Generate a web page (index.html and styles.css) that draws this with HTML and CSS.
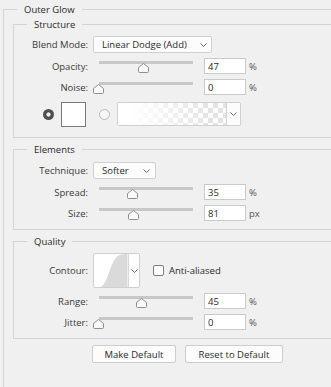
FILE: index.html
```html
<!DOCTYPE html>
<html lang="en">
<head>
<meta charset="utf-8">
<title>Outer Glow</title>
<link rel="stylesheet" href="styles.css">
</head>
<body>
<fieldset class="group outer">
  <legend>Outer Glow</legend>

  <fieldset class="group sub structure">
    <legend>Structure</legend>
    <div class="row">
      <span class="lbl">Blend Mode:</span>
      <div class="select blend"><span class="sel-text">Linear Dodge (Add)</span><svg class="chev" width="7" height="4" viewBox="0 0 7 4"><polyline points="0.5,0.5 3.5,3.5 6.5,0.5"/></svg></div>
    </div>
    <div class="row srow first">
      <span class="lbl">Opacity:</span>
      <div class="slider"><div class="track"></div><svg class="thumb" style="left:45px" width="11" height="10" viewBox="0 0 11 10"><path d="M5.5,0.5 L10.5,4.5 L10.5,8.5 Q10.5,9.5 9.5,9.5 L1.5,9.5 Q0.5,9.5 0.5,8.5 L0.5,4.5 Z"/></svg></div>
      <input class="num" type="text" value="47" readonly><span class="unit">%</span>
    </div>
    <div class="row srow">
      <span class="lbl">Noise:</span>
      <div class="slider"><div class="track"></div><svg class="thumb" style="left:0px" width="11" height="10" viewBox="0 0 11 10"><path d="M5.5,0.5 L10.5,4.5 L10.5,8.5 Q10.5,9.5 9.5,9.5 L1.5,9.5 Q0.5,9.5 0.5,8.5 L0.5,4.5 Z"/></svg></div>
      <input class="num" type="text" value="0" readonly><span class="unit">%</span>
    </div>
    <div class="row color-row">
      <span class="radio on"></span>
      <span class="swatch"></span>
      <span class="radio"></span>
      <div class="gradient">
        <div class="grad-fill"></div>
        <div class="grad-arrow"><svg class="chev" width="7" height="4" viewBox="0 0 7 4"><polyline points="0.5,0.5 3.5,3.5 6.5,0.5"/></svg></div>
      </div>
    </div>
  </fieldset>

  <fieldset class="group sub elements">
    <legend>Elements</legend>
    <div class="row">
      <span class="lbl">Technique:</span>
      <div class="select technique"><span class="sel-text">Softer</span><svg class="chev" width="7" height="4" viewBox="0 0 7 4"><polyline points="0.5,0.5 3.5,3.5 6.5,0.5"/></svg></div>
    </div>
    <div class="row srow first">
      <span class="lbl">Spread:</span>
      <div class="slider"><div class="track"></div><svg class="thumb" style="left:34px" width="11" height="10" viewBox="0 0 11 10"><path d="M5.5,0.5 L10.5,4.5 L10.5,8.5 Q10.5,9.5 9.5,9.5 L1.5,9.5 Q0.5,9.5 0.5,8.5 L0.5,4.5 Z"/></svg></div>
      <input class="num" type="text" value="35" readonly><span class="unit">%</span>
    </div>
    <div class="row srow">
      <span class="lbl">Size:</span>
      <div class="slider"><div class="track"></div><svg class="thumb" style="left:35px" width="11" height="10" viewBox="0 0 11 10"><path d="M5.5,0.5 L10.5,4.5 L10.5,8.5 Q10.5,9.5 9.5,9.5 L1.5,9.5 Q0.5,9.5 0.5,8.5 L0.5,4.5 Z"/></svg></div>
      <input class="num" type="text" value="81" readonly><span class="unit">px</span>
    </div>
  </fieldset>

  <fieldset class="group sub quality">
    <legend>Quality</legend>
    <div class="row contour-row">
      <span class="lbl">Contour:</span>
      <div class="contour">
        <svg class="curve" width="34" height="34" viewBox="0 0 34 34"><path d="M6,34 C14,31 16,8 24,2 C26,0.5 29,0 34,0 L34,34 Z"/></svg>
        <div class="contour-arrow"><svg class="chev" width="7" height="4" viewBox="0 0 7 4"><polyline points="0.5,0.5 3.5,3.5 6.5,0.5"/></svg></div>
      </div>
      <span class="check"></span><span class="check-label">Anti-aliased</span>
    </div>
    <div class="row srow first">
      <span class="lbl">Range:</span>
      <div class="slider"><div class="track"></div><svg class="thumb" style="left:43px" width="11" height="10" viewBox="0 0 11 10"><path d="M5.5,0.5 L10.5,4.5 L10.5,8.5 Q10.5,9.5 9.5,9.5 L1.5,9.5 Q0.5,9.5 0.5,8.5 L0.5,4.5 Z"/></svg></div>
      <input class="num" type="text" value="45" readonly><span class="unit">%</span>
    </div>
    <div class="row srow">
      <span class="lbl">Jitter:</span>
      <div class="slider"><div class="track"></div><svg class="thumb" style="left:0px" width="11" height="10" viewBox="0 0 11 10"><path d="M5.5,0.5 L10.5,4.5 L10.5,8.5 Q10.5,9.5 9.5,9.5 L1.5,9.5 Q0.5,9.5 0.5,8.5 L0.5,4.5 Z"/></svg></div>
      <input class="num" type="text" value="0" readonly><span class="unit">%</span>
    </div>
  </fieldset>

  <div class="buttons">
    <button class="btn make">Make Default</button>
    <button class="btn reset">Reset to Default</button>
  </div>
</fieldset>
</body>
</html>
```

FILE: styles.css
```css
* { box-sizing: border-box; }
html, body {
  margin: 0;
  padding: 0;
  background: #f0f0f0;
  overflow: hidden;
}
body {
  width: 331px;
  height: 387px;
  font-family: "Open Sans", "Liberation Sans", sans-serif;
  font-size: 9.5px;
  color: #333;
}

.group {
  margin: 0;
  padding: 0;
  border: 1px solid #d3d3d3;
  border-right: none;
  min-width: 0;
}
.group > legend {
  margin-left: 13px;
  padding: 0 7px;
  height: 15px;
  line-height: 15px;
  color: #2b2b2b;
}

.outer {
  margin: 2px 0 0 3px;
  width: 328px;
  height: 385px;
  border-bottom: none;
}
.sub {
  margin-left: 9px;
  width: 319px;
}
.structure { padding: 4px 0 10px; }
.elements  { margin-top: 4px; padding: 5px 0 8px; }
.quality   { margin-top: 4px; padding: 4px 0 8px; }

.row {
  display: flex;
  align-items: center;
  height: 17px;
}
.lbl {
  flex: none;
  width: 74px;
  margin-right: 5px;
  text-align: right;
  color: #3a3a3a;
}

/* dropdowns */
.select {
  display: flex;
  align-items: center;
  height: 17px;
  background: #fcfcfc;
  border: 1px solid #d0d0d0;
  border-radius: 2px;
  padding-left: 8px;
}
.blend { width: 119px; padding-right: 4px; }
.technique { width: 63px; padding-right: 5px; }
.sel-text { flex: 1; white-space: nowrap; color: #2b2b2b; }
.chev { display: block; flex: none; }
.chev polyline { fill: none; stroke: #6a6a6a; stroke-width: 1; }

/* slider rows */
.srow { height: 16px; }
.srow.first { margin-top: 5px; }
.srow + .srow { margin-top: 5px; }
.slider {
  position: relative;
  flex: none;
  width: 106px;
  height: 16px;
  margin-right: 5px;
  align-self: flex-start;
}
.track {
  margin: 3px 0 0 6px;
  width: 94px;
  height: 3px;
  background: #c8c8c8;
}
.thumb {
  position: absolute;
  top: 5px;
  display: block;
}
.thumb path { fill: #fafafa; stroke: #8e8e8e; stroke-width: 1; }
.num {
  flex: none;
  width: 42px;
  height: 16px;
  margin: 0 3px 0 0;
  padding: 0 0 0 3px;
  border: 1px solid #cacaca;
  background: #fff;
  font: inherit;
  color: #2b2b2b;
  line-height: 14px;
  outline: none;
}
.unit { color: #555; }

/* colour row */
.color-row {
  height: 25px;
  margin-top: 7px;
}
.radio {
  flex: none;
  width: 11px;
  height: 11px;
  border-radius: 50%;
  border: 1px solid #b8b8b8;
  background: #f7f7f7;
  margin-left: 13px;
}
.radio.on {
  margin-left: 29px;
  border: none;
  background: radial-gradient(circle, #eeeeee 0 1.8px, #4f4f4f 2.4px);
}
.swatch {
  flex: none;
  width: 25px;
  height: 25px;
  margin-left: 7px;
  border: 1px solid #7a7a7a;
  background: #fff;
}
.gradient {
  flex: none;
  display: flex;
  width: 124px;
  height: 24px;
  margin-left: 7px;
  align-self: flex-start;
  border: 1px solid #d0d0d0;
  border-radius: 2px;
  background: #fff;
  overflow: hidden;
}
.grad-fill {
  flex: 1;
  background:
    linear-gradient(to right, #fff 0%, #fff 12%, rgba(255,255,255,0.6) 45%, rgba(255,255,255,0.1) 85%),
    repeating-conic-gradient(#e0e0e0 0 25%, #fdfdfd 0 50%) 0 0 / 10px 10px;
}
.grad-arrow {
  flex: none;
  width: 14px;
  display: flex;
  align-items: center;
  justify-content: center;
  border-left: 1px solid #d0d0d0;
  background: #fcfcfc;
}

/* contour */
.contour-row { height: 35px; }
.contour {
  flex: none;
  display: flex;
  width: 47px;
  height: 35px;
  border: 1px solid #cfcfcf;
  border-radius: 2px;
  background: #fff;
  overflow: hidden;
}
.curve { display: block; flex: none; width: 34px; height: 33px; }
.curve path { fill: #dadada; }
.contour-arrow {
  flex: 1;
  display: flex;
  align-items: center;
  justify-content: center;
  border-left: 1px solid #d8d8d8;
}
.check {
  flex: none;
  width: 11px;
  height: 11px;
  margin-left: 13px;
  border: 1px solid #7d7d7d;
  border-radius: 2px;
  background: #fff;
}
.check-label { margin-left: 5px; color: #2b2b2b; }

/* buttons */
.buttons {
  display: flex;
  gap: 9px;
  margin: 6px 0 0 88px;
}
.btn {
  height: 18px;
  padding: 0;
  border: 1px solid #cdcdcd;
  border-radius: 2px;
  background: #fcfcfc;
  font: inherit;
  color: #2b2b2b;
}
.make { width: 84px; }
.reset { width: 98px; }
```
